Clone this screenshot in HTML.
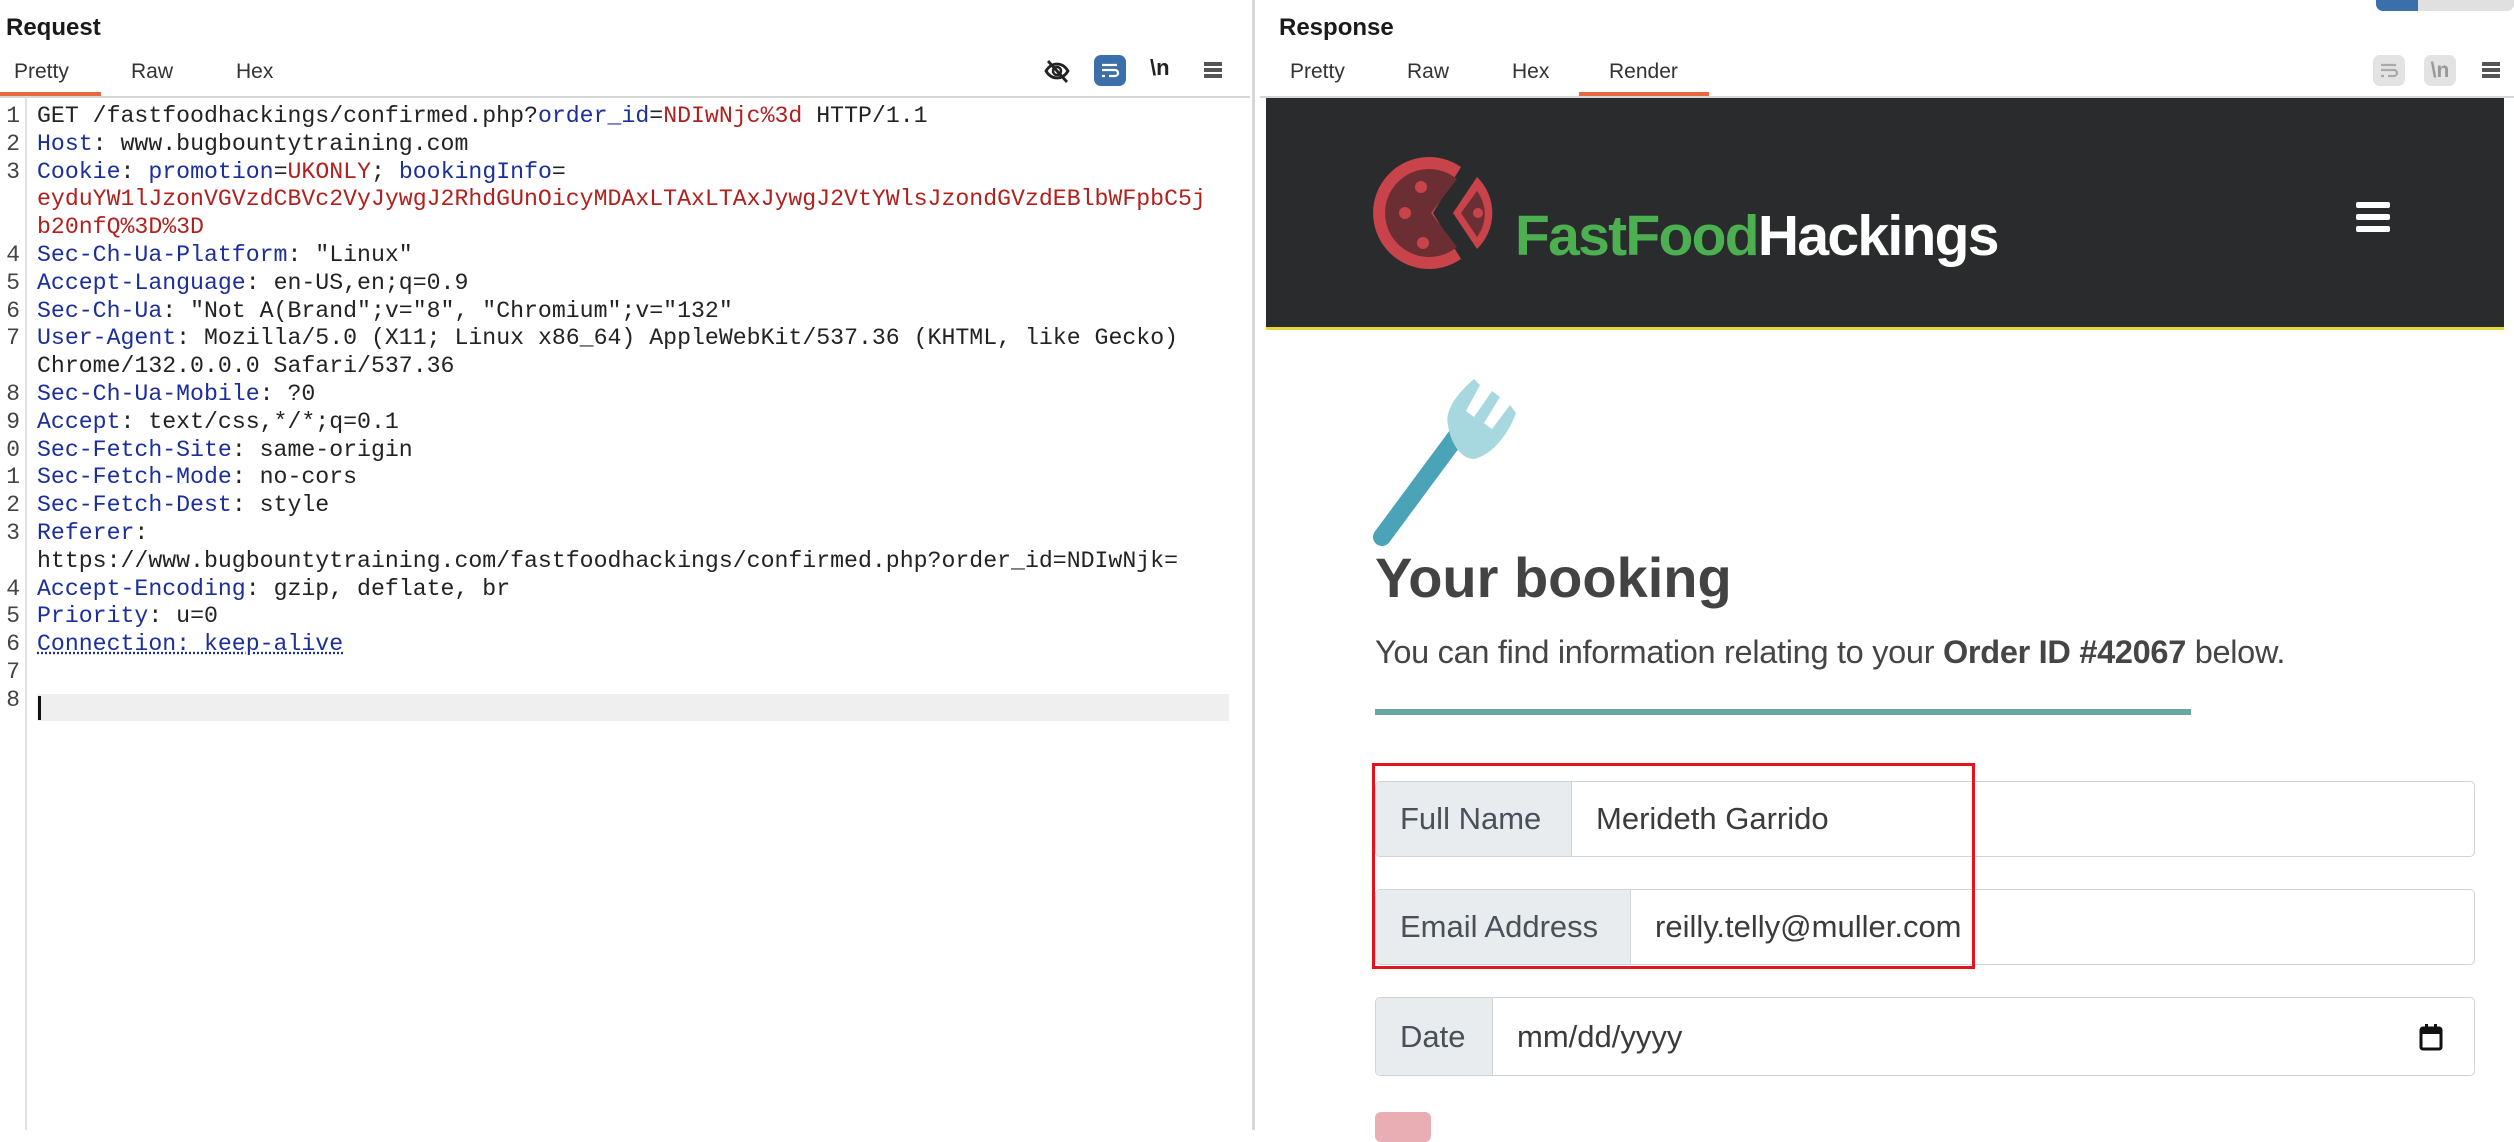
<!DOCTYPE html>
<html><head><meta charset="utf-8"><style>
*{margin:0;padding:0;box-sizing:border-box}
body{width:2514px;height:1130px;overflow:hidden;background:#fff;font-family:"Liberation Sans",sans-serif;position:relative}
.abs{position:absolute}
.title{font-size:24px;font-weight:bold;color:#1a1a1a;top:14px}
.tab{font-size:21px;color:#333;top:60px}
.code{font-family:"Liberation Mono",monospace;font-size:23.2px;line-height:27.8px;color:#222;white-space:pre}
.k{color:#1b2e9a}.v{color:#b0211e}
.ln{font-family:"Liberation Mono",monospace;font-size:22.9px;line-height:27.8px;color:#444;text-align:right;width:20px;overflow:hidden;white-space:pre;direction:rtl}
.grp{position:absolute;left:1375px;width:1100px;border:1.5px solid #ced4da;border-radius:5px;display:flex;overflow:hidden;font-size:31px;color:#495057}
.grp .lab{background:#e9ecef;border-right:1.5px solid #ced4da;display:flex;align-items:center;padding-left:24px}
.grp .val{display:flex;align-items:center;padding-left:24px;color:#3b3b3b;flex:1}
</style></head><body>
<div class="abs title" style="left:6px">Request</div>
<div class="abs tab" style="left:14px">Pretty</div>
<div class="abs tab" style="left:131px">Raw</div>
<div class="abs tab" style="left:236px">Hex</div>
<div class="abs" style="left:0;top:92px;width:101px;height:4px;background:#e8693f"></div>
<div class="abs" style="left:0;top:96px;width:1250px;height:2px;background:#d4d6d8"></div>
<svg class="abs" style="left:1043px;top:57px" width="28" height="28" viewBox="0 0 28 28"><path d="M3 14c3-5 7-7 11-7s8 2 11 7c-3 5-7 7-11 7s-8-2-11-7z" fill="none" stroke="#222" stroke-width="2.8"/><circle cx="14" cy="14" r="4" fill="none" stroke="#222" stroke-width="2.5"/><line x1="5" y1="4" x2="24" y2="25" stroke="#222" stroke-width="2.8"/></svg>
<div class="abs" style="left:1094px;top:55px;width:32px;height:31px;border-radius:7px;background:#3b6faa"></div>
<svg class="abs" style="left:1098px;top:58px" width="24" height="24" viewBox="0 0 24 24"><path d="M4 7h15M4 12h13a3 3 0 0 1 0 6h-6M4 18h3" fill="none" stroke="#fff" stroke-width="2.3"/></svg>
<div class="abs" style="left:1150px;top:55px;font-size:22px;font-weight:bold;color:#222">\n</div>
<div class="abs" style="left:1204px;top:62px;width:18px;height:4px;background:#555;box-shadow:0 6px 0 #555,0 12px 0 #555"></div>
<div class="abs" style="left:1252px;top:0;width:3px;height:1130px;background:#d8d8d8"></div>
<div class="abs" style="left:25px;top:98px;width:2px;height:1032px;background:#e2e2e2"></div>
<div class="abs" style="left:37px;top:694px;width:1192px;height:27px;background:#efefef"></div>
<div class="abs" style="left:38px;top:696px;width:3px;height:24px;background:#111"></div>
<div class="abs ln" style="left:0;top:103px">1
2
3


4
5
6
7

8
9
0
1
2
3

4
5
6
7
8</div>
<div class="abs code" style="left:37px;top:103px">GET /fastfoodhackings/confirmed.php?<span class="k">order_id</span>=<span class="v">NDIwNjc%3d</span> HTTP/1.1
<span class="k">Host</span>: www.bugbountytraining.com
<span class="k">Cookie</span>: <span class="k">promotion</span>=<span class="v">UKONLY</span>; <span class="k">bookingInfo</span>=
<span class="v">eyduYW1lJzonVGVzdCBVc2VyJywgJ2RhdGUnOicyMDAxLTAxLTAxJywgJ2VtYWlsJzondGVzdEBlbWFpbC5j</span>
<span class="v">b20nfQ%3D%3D</span>
<span class="k">Sec-Ch-Ua-Platform</span>: "Linux"
<span class="k">Accept-Language</span>: en-US,en;q=0.9
<span class="k">Sec-Ch-Ua</span>: "Not A(Brand";v="8", "Chromium";v="132"
<span class="k">User-Agent</span>: Mozilla/5.0 (X11; Linux x86_64) AppleWebKit/537.36 (KHTML, like Gecko)
Chrome/132.0.0.0 Safari/537.36
<span class="k">Sec-Ch-Ua-Mobile</span>: ?0
<span class="k">Accept</span>: text/css,*/*;q=0.1
<span class="k">Sec-Fetch-Site</span>: same-origin
<span class="k">Sec-Fetch-Mode</span>: no-cors
<span class="k">Sec-Fetch-Dest</span>: style
<span class="k">Referer</span>:
https://www.bugbountytraining.com/fastfoodhackings/confirmed.php?order_id=NDIwNjk=
<span class="k">Accept-Encoding</span>: gzip, deflate, br
<span class="k">Priority</span>: u=0
<span class="k" style="text-decoration:underline dotted #1b2e9a">Connection: keep-alive</span></div>

<div class="abs title" style="left:1279px">Response</div>
<div class="abs tab" style="left:1290px">Pretty</div>
<div class="abs tab" style="left:1407px">Raw</div>
<div class="abs tab" style="left:1512px">Hex</div>
<div class="abs tab" style="left:1609px">Render</div>
<div class="abs" style="left:1579px;top:92px;width:130px;height:4px;background:#e8693f"></div>
<div class="abs" style="left:1260px;top:96px;width:1254px;height:2px;background:#d4d6d8"></div>
<div class="abs" style="left:2373px;top:55px;width:32px;height:31px;border-radius:7px;background:#e3e3e3"></div>
<svg class="abs" style="left:2377px;top:58px" width="24" height="24" viewBox="0 0 24 24"><path d="M4 7h15M4 12h13a3 3 0 0 1 0 6h-6M4 18h3" fill="none" stroke="#aaa" stroke-width="2.3"/></svg>
<div class="abs" style="left:2424px;top:55px;width:32px;height:31px;border-radius:7px;background:#e3e3e3;color:#999;font-size:21px;font-weight:bold;text-align:center;line-height:31px">\n</div>
<div class="abs" style="left:2482px;top:62px;width:18px;height:4px;background:#555;box-shadow:0 6px 0 #555,0 12px 0 #555"></div>
<div class="abs" style="left:2376px;top:0;width:138px;height:11px;border-radius:0 0 7px 7px;background:#e0e0e0"></div>
<div class="abs" style="left:2376px;top:0;width:42px;height:11px;border-radius:0 0 0 7px;background:#3b6faa"></div>

<div class="abs" style="left:1266px;top:98px;width:1238px;height:232px;background:#2a2b2d;border-bottom:3px solid #e6d73a"></div>
<svg class="abs" style="left:1373px;top:155px" width="132" height="116" viewBox="0 0 132 116">
<path d="M88 12 A56 56 0 1 0 88 104 L60 58 Z" fill="#c9434a"/>
<path d="M84 24 A44 44 0 1 0 84 92 L58 58 Z" fill="#6b2f33"/>
<path d="M104 22 A50 50 0 0 1 104 94 L80 58 Z" fill="#c9434a"/>
<path d="M104 36 A38 38 0 0 1 104 82 L88 58 Z" fill="#6b2f33"/>
<circle cx="48" cy="32" r="6" fill="#c9434a"/><circle cx="32" cy="58" r="6" fill="#c9434a"/><circle cx="50" cy="88" r="6" fill="#c9434a"/><circle cx="105" cy="58" r="5" fill="#c9434a"/>
</svg>
<div class="abs" style="left:1515px;top:202px;font-size:57px;font-weight:bold;letter-spacing:-1.7px;line-height:68px"><span style="color:#4caf50">FastFood</span><span style="color:#fff">Hackings</span></div>
<div class="abs" style="left:2356px;top:202px;width:34px;height:6px;border-radius:2px;background:#fff;box-shadow:0 12px 0 #fff,0 24px 0 #fff"></div>
<svg class="abs" style="left:1370px;top:375px" width="180" height="175" viewBox="0 0 180 175">
<line x1="12" y1="162" x2="86" y2="62" stroke="#4aa3b7" stroke-width="18" stroke-linecap="round"/>
<path d="M78 50 C74 34 90 16 104 4 L110 10 L96 36 L104 42 L122 16 L130 22 L114 48 L122 54 L140 30 L146 38 C138 60 122 80 104 84 C90 84 80 66 78 50Z" fill="#a8d8df"/>
</svg>
<div class="abs" style="left:1375px;top:545px;font-size:56px;font-weight:bold;color:#434343">Your booking</div>
<div class="abs" style="left:1375px;top:634px;font-size:32.5px;color:#454545;letter-spacing:-0.3px">You can find information relating to your <b>Order ID #42067</b> below.</div>
<div class="abs" style="left:1375px;top:709px;width:816px;height:6px;background:#6aa89f"></div>
<div class="grp" style="top:781px;height:76px"><div class="lab" style="width:196px">Full Name</div><div class="val">Merideth Garrido</div></div>
<div class="grp" style="top:889px;height:76px"><div class="lab" style="width:255px">Email Address</div><div class="val">reilly.telly@muller.com</div></div>
<div class="grp" style="top:997px;height:79px"><div class="lab" style="width:117px">Date</div><div class="val">mm/dd/yyyy</div>
<svg style="position:absolute;right:30px;top:24px" width="26" height="30" viewBox="0 0 26 30"><rect x="3" y="6" width="20" height="21" rx="2" fill="none" stroke="#111" stroke-width="3"/><rect x="3" y="6" width="20" height="6" fill="#111"/><rect x="7" y="2" width="3" height="6" fill="#111"/><rect x="16" y="2" width="3" height="6" fill="#111"/></svg></div>
<div class="abs" style="left:1372px;top:763px;width:603px;height:206px;border:3px solid #e2141e"></div>
<div class="abs" style="left:1375px;top:1112px;width:56px;height:30px;border-radius:6px;background:#e8aeb3"></div>
</body></html>
